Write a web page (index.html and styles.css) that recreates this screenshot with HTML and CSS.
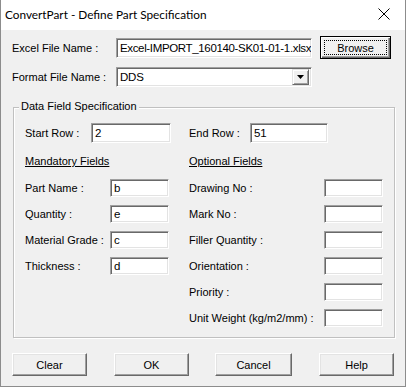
FILE: index.html
```html
<!DOCTYPE html>
<html lang="en">
<head>
    <meta charset="UTF-8">
    <meta name="viewport" content="width=device-width, initial-scale=1.0">
    <title>ConvertPart - Define Part Specification</title>
    <link rel="stylesheet" href="styles.css">
</head>
<body>
    <div class="window">
        <div class="titlebar">
            <span class="title">ConvertPart - Define Part Specification</span>
            <svg class="close" width="12" height="12" viewBox="0 0 12 12">
                <path d="M0.5 0.5 L11.5 11.5 M11.5 0.5 L0.5 11.5" stroke="#000" stroke-width="1" fill="none"/>
            </svg>
        </div>

        <div class="content">
            <div class="file-row">
                <label class="file-label">Excel File Name :</label>
                <div class="edit file-edit">Excel-IMPORT_160140-SK01-01-1.xlsx</div>
                <button class="btn btn-default">
                    <span class="focus">Browse</span>
                </button>
            </div>

            <div class="file-row format-row">
                <label class="file-label">Format File Name :</label>
                <div class="edit combo">
                    <span class="combo-text">DDS</span>
                    <span class="combo-btn">
                        <svg width="7" height="4" viewBox="0 0 7 4"><path d="M0 0 H7 L3.5 4 Z" fill="#000"/></svg>
                    </span>
                </div>
            </div>

            <div class="group">
                <span class="group-title">Data Field Specification</span>
                <div class="group-body">
                    <div class="col col-left">
                        <div class="range-row">
                            <label class="start-label">Start Row :</label>
                            <div class="edit range-edit">2</div>
                        </div>
                        <div class="heading">Mandatory Fields</div>
                        <div class="field">
                            <label class="field-label">Part Name :</label>
                            <div class="edit small-edit">b</div>
                        </div>
                        <div class="field">
                            <label class="field-label">Quantity :</label>
                            <div class="edit small-edit">e</div>
                        </div>
                        <div class="field">
                            <label class="field-label">Material Grade :</label>
                            <div class="edit small-edit">c</div>
                        </div>
                        <div class="field">
                            <label class="field-label">Thickness :</label>
                            <div class="edit small-edit">d</div>
                        </div>
                    </div>

                    <div class="col col-right">
                        <div class="range-row">
                            <label class="end-label">End Row :</label>
                            <div class="edit range-edit end-edit">51</div>
                        </div>
                        <div class="heading">Optional Fields</div>
                        <div class="field">
                            <label class="opt-label">Drawing No :</label>
                            <div class="edit small-edit"></div>
                        </div>
                        <div class="field">
                            <label class="opt-label">Mark No :</label>
                            <div class="edit small-edit"></div>
                        </div>
                        <div class="field">
                            <label class="opt-label">Filler Quantity :</label>
                            <div class="edit small-edit"></div>
                        </div>
                        <div class="field">
                            <label class="opt-label">Orientation :</label>
                            <div class="edit small-edit"></div>
                        </div>
                        <div class="field">
                            <label class="opt-label">Priority :</label>
                            <div class="edit small-edit"></div>
                        </div>
                        <div class="field">
                            <label class="opt-label">Unit Weight (kg/m2/mm) :</label>
                            <div class="edit small-edit"></div>
                        </div>
                    </div>
                </div>
            </div>

            <div class="buttons">
                <button class="btn">Clear</button>
                <button class="btn">OK</button>
                <button class="btn">Cancel</button>
                <button class="btn">Help</button>
            </div>
        </div>
    </div>
</body>
</html>
```

FILE: styles.css
```css
body {
    margin: 0;
    background-color: #fff;
    font-family: "Liberation Sans", Arial, sans-serif;
    font-size: 11px;
    color: #000;
}
.window {
    width: 406px;
    height: 387px;
    box-sizing: border-box;
    border: 1px solid #8c8c8c;
    border-top: none;
    background-color: #f0f0f0;
}
.titlebar {
    height: 30px;
    background-color: #fff;
    display: flex;
    align-items: center;
    justify-content: space-between;
    padding: 0 15px 0 4px;
}
.title {
    font-family: Lato, "Noto Sans", sans-serif;
    font-size: 11.8px;
    margin-top: -2px;
}
.close {
    margin-top: -3px;
}
.content {
    padding: 6px 0 0 11px;
}
.file-row {
    display: flex;
    align-items: center;
    height: 23px;
}
.format-row {
    margin-top: 8px;
    height: 20px;
}
.file-label {
    width: 104px;
}
.edit {
    box-sizing: border-box;
    background-color: #fff;
    border-top: 1px solid #a0a0a0;
    border-left: 1px solid #a0a0a0;
    border-right: 1px solid #fff;
    border-bottom: 1px solid #fff;
    box-shadow: inset 1px 1px 0 #696969, inset -1px -1px 0 #e3e3e3;
    font-size: 11.5px;
    letter-spacing: -0.2px;
    line-height: 16px;
    padding: 1px 3px 0;
    white-space: nowrap;
    overflow: hidden;
}
.file-edit {
    width: 196px;
    height: 20px;
    padding: 1px 0 0 3px;
    letter-spacing: -0.35px;
}
.btn {
    box-sizing: border-box;
    width: 75px;
    height: 23px;
    padding: 0;
    font-family: "Liberation Sans", Arial, sans-serif;
    font-size: 11px;
    color: #000;
    background-color: #f0f0f0;
    border-top: 1px solid #fff;
    border-left: 1px solid #fff;
    border-right: 1px solid #696969;
    border-bottom: 1px solid #696969;
    box-shadow: inset -1px -1px 0 #a0a0a0, inset 1px 1px 0 #e3e3e3;
}
.btn-default {
    width: 71px;
    margin-left: 8px;
    border: 1px solid #000;
    box-shadow: inset 1px 1px 0 #fff, inset -1px -1px 0 #696969, inset -2px -2px 0 #a0a0a0;
    display: flex;
    align-items: stretch;
    padding: 3px;
}
.focus {
    flex: 1;
    display: flex;
    align-items: center;
    justify-content: center;
    border: 1px dotted #000;
}
.combo {
    width: 196px;
    height: 20px;
    display: flex;
    align-items: center;
    justify-content: space-between;
    padding: 0 2px 0 2px;
}
.combo-text {
    padding-left: 1px;
}
.combo-btn {
    box-sizing: border-box;
    width: 17px;
    height: 16px;
    display: flex;
    align-items: center;
    justify-content: center;
    background-color: #f0f0f0;
    border-top: 1px solid #e3e3e3;
    border-left: 1px solid #e3e3e3;
    border-right: 1px solid #696969;
    border-bottom: 1px solid #696969;
    box-shadow: inset 1px 1px 0 #fff, inset -1px -1px 0 #a0a0a0;
}
.group {
    position: relative;
    box-sizing: border-box;
    width: 382px;
    height: 231px;
    margin: 20px 0 0 1px;
    border: 1px solid #c0c0c0;
    box-shadow: 1px 1px 0 #fff, inset 1px 1px 0 #fff;
}
.group-title {
    position: absolute;
    top: -8px;
    left: 5px;
    padding: 0 2px;
    background-color: #f0f0f0;
}
.group-body {
    display: flex;
    padding: 15px 0 0 11px;
}
.col-left {
    width: 164px;
}
.col-right {
    flex: 1;
}
.range-row {
    display: flex;
    align-items: center;
    height: 20px;
}
.start-label {
    width: 66px;
}
.end-label {
    width: 61px;
}
.range-edit {
    width: 80px;
    height: 20px;
}
.end-edit {
    width: 78px;
}
.heading {
    height: 36px;
    line-height: 36px;
    text-decoration: underline;
}
.field {
    display: flex;
    align-items: center;
    height: 18px;
    margin-bottom: 8px;
}
.field-label {
    width: 85px;
}
.opt-label {
    width: 135px;
}
.small-edit {
    width: 59px;
    height: 18px;
    line-height: 15px;
}
.buttons {
    display: flex;
    gap: 27px;
    margin-top: 15px;
}
.buttons .btn:nth-child(3) {
    width: 77px;
    margin-left: -1px;
}
```
